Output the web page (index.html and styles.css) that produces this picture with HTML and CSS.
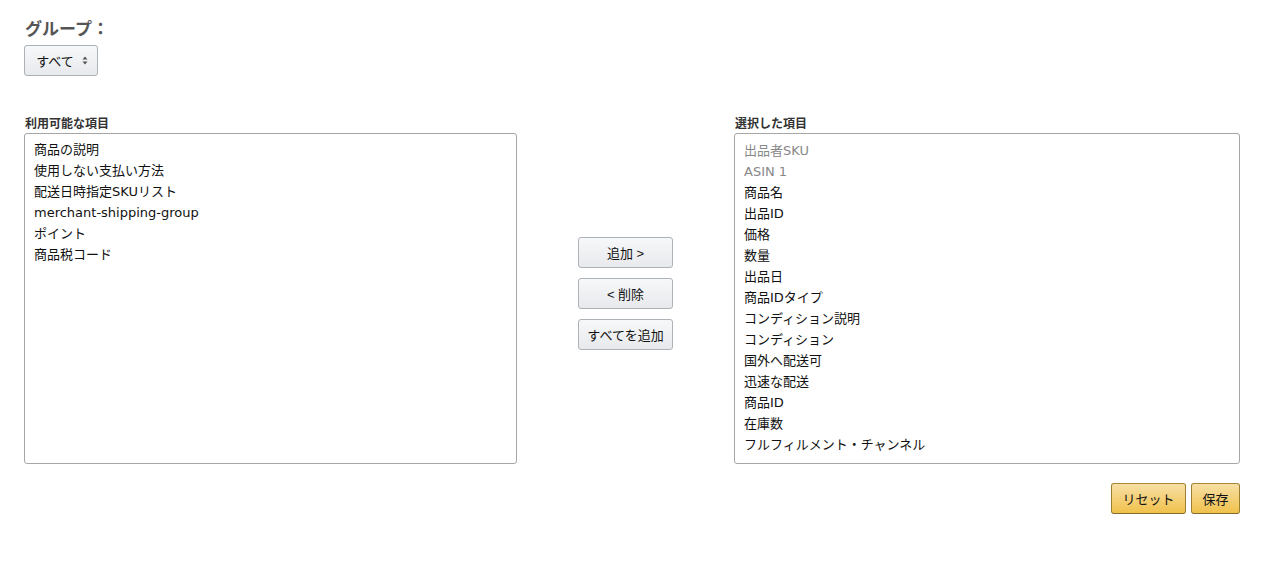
FILE: index.html
```html
<!DOCTYPE html>
<html lang="ja">
<head>
<meta charset="UTF-8">
<meta name="viewport" content="width=device-width, initial-scale=1.0">
<title>列の設定</title>
<link rel="stylesheet" href="styles.css">
</head>
<body>

<div class="page">
    <h3 class="group-title">グループ：</h3>
    <button class="group-select">
        <span>すべて</span>
        <svg width="6" height="9" viewBox="0 0 6 9"><path d="M3 0.5 L5.5 3.5 H0.5 Z M3 8.5 L5.5 5.5 H0.5 Z" fill="#555"/></svg>
    </button>

    <div class="columns">
        <div class="col col-left">
            <label class="list-label">利用可能な項目</label>
            <ul class="listbox">
                <li>商品の説明</li>
                <li>使用しない支払い方法</li>
                <li>配送日時指定SKUリスト</li>
                <li>merchant-shipping-group</li>
                <li>ポイント</li>
                <li>商品税コード</li>
            </ul>
        </div>

        <div class="col col-mid">
            <button class="btn">追加 &gt;</button>
            <button class="btn">&lt; 削除</button>
            <button class="btn">すべてを追加</button>
        </div>

        <div class="col col-right">
            <label class="list-label">選択した項目</label>
            <ul class="listbox listbox-right">
                <li class="fixed">出品者SKU</li>
                <li class="fixed">ASIN 1</li>
                <li>商品名</li>
                <li>出品ID</li>
                <li>価格</li>
                <li>数量</li>
                <li>出品日</li>
                <li>商品IDタイプ</li>
                <li>コンディション説明</li>
                <li>コンディション</li>
                <li>国外へ配送可</li>
                <li>迅速な配送</li>
                <li>商品ID</li>
                <li>在庫数</li>
                <li>フルフィルメント・チャンネル</li>
            </ul>
        </div>
    </div>

    <div class="actions">
        <button class="btn btn-primary btn-reset">リセット</button>
        <button class="btn btn-primary btn-save">保存</button>
    </div>
</div>

</body>
</html>
```

FILE: styles.css
```css
body {
    font-family: "Liberation Sans", Arial, "Noto Sans CJK JP", sans-serif;
    margin: 0;
    padding: 0;
    background: #fff;
    color: #111;
}

.page {
    padding: 19px 28px 0 24px;
}

.group-title {
    margin: 0 0 0 1px;
    font-size: 17px;
    line-height: 22px;
    color: #555;
    font-weight: bold;
}

.group-select {
    margin-top: 4px;
    width: 74px;
    height: 31px;
    display: flex;
    align-items: center;
    justify-content: center;
    gap: 8px;
    font-family: inherit;
    font-size: 13px;
    color: #111;
    background-image: linear-gradient(to bottom, #f7f8fa, #e7e9ec);
    border: 1px solid #adb1b8;
    border-radius: 3px;
    padding: 0 0 0 2px;
}

.columns {
    display: flex;
    margin-top: 40px;
}

.col-left {
    width: 493px;
}

.col-mid {
    width: 95px;
    margin: 0 61px;
    padding-top: 121px;
    display: flex;
    flex-direction: column;
    gap: 10px;
}

.col-right {
    width: 506px;
}

.list-label {
    display: block;
    font-size: 12px;
    line-height: 16px;
    font-weight: bold;
    color: #333;
    margin-left: 1px;
}

.listbox {
    list-style: none;
    margin: 1px 0 0 0;
    padding: 5px 9px;
    height: 331px;
    box-sizing: border-box;
    border: 1px solid #a6a6a6;
    border-radius: 3px;
    font-family: "DejaVu Sans", "Noto Sans CJK JP", sans-serif;
    font-size: 13px;
    line-height: 21px;
}

.listbox-right {
    padding-top: 6px;
}

.listbox li {
    white-space: nowrap;
}

.listbox li.fixed {
    color: #888;
}

.btn {
    height: 31px;
    font-family: inherit;
    font-size: 13px;
    color: #111;
    background-image: linear-gradient(to bottom, #f7f8fa, #e7e9ec);
    border: 1px solid #adb1b8;
    border-radius: 3px;
    padding: 0;
    cursor: pointer;
}

.actions {
    display: flex;
    justify-content: flex-end;
    gap: 5px;
    margin-top: 19px;
}

.btn-primary {
    background-image: linear-gradient(to bottom, #f7dfa5, #f0c14b);
    border-color: #a88734 #9c7e31 #846a29;
}

.btn-reset {
    width: 75px;
}

.btn-save {
    width: 49px;
}
```
